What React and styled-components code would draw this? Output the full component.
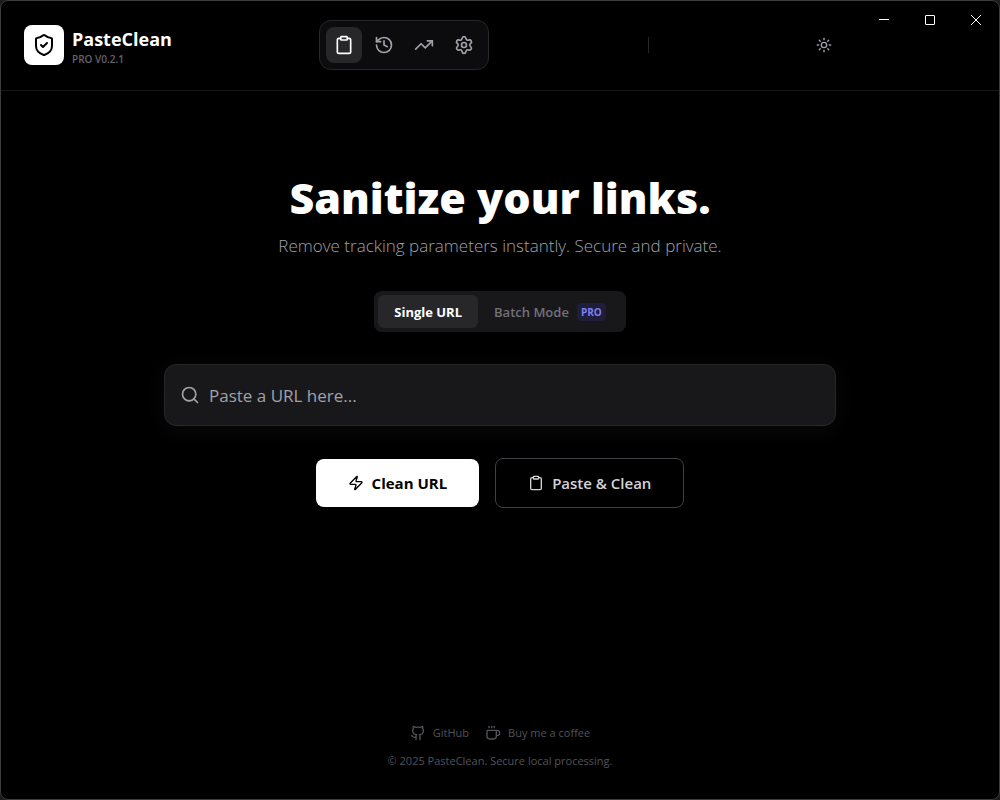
import React, { useState } from 'react';
import styled, { createGlobalStyle } from 'styled-components';
import {
  ShieldCheck,
  Clipboard,
  History,
  TrendingUp,
  Settings,
  Sun,
  Search,
  Zap,
  Github,
  Coffee,
} from 'lucide-react';

const navItems = [
  { id: 'clean', label: 'Clean', icon: Clipboard },
  { id: 'history', label: 'History', icon: History },
  { id: 'stats', label: 'Statistics', icon: TrendingUp },
  { id: 'settings', label: 'Settings', icon: Settings },
];

const App = () => {
  const [page, setPage] = useState('clean');
  const [mode, setMode] = useState('single');
  const [url, setUrl] = useState('');

  return (
    <>
      <GlobalStyle />
      <Window>
        <WindowControls>
          <WindowButton aria-label="Minimize">
            <svg width="10" height="10" shapeRendering="crispEdges">
              <path d="M0 4.5h10" stroke="#fff" />
            </svg>
          </WindowButton>
          <WindowButton aria-label="Maximize">
            <svg width="10" height="10">
              <rect x="0.5" y="0.5" width="9" height="9" rx="0.5" fill="none" stroke="#fff" />
            </svg>
          </WindowButton>
          <WindowButton aria-label="Close">
            <svg width="10" height="10">
              <path d="M0 0l10 10M10 0L0 10" stroke="#fff" />
            </svg>
          </WindowButton>
        </WindowControls>

        <Header>
          <Brand>
            <Logo>
              <ShieldCheck size={24} />
            </Logo>
            <BrandText>
              <BrandName>PasteClean</BrandName>
              <Version>PRO V0.2.1</Version>
            </BrandText>
          </Brand>
          <Nav>
            {navItems.map(({ id, label, icon: Icon }) => (
              <NavButton
                key={id}
                aria-label={label}
                $active={page === id}
                onClick={() => setPage(id)}
              >
                <Icon size={20} />
              </NavButton>
            ))}
          </Nav>
          <HeaderRight>
            <Divider />
            <ThemeButton aria-label="Toggle theme">
              <Sun size={16} />
            </ThemeButton>
          </HeaderRight>
        </Header>

        <Main>
          <Title>Sanitize your links.</Title>
          <Subtitle>Remove tracking parameters instantly. Secure and private.</Subtitle>
          <Tabs>
            <Tab $active={mode === 'single'} onClick={() => setMode('single')}>
              Single URL
            </Tab>
            <Tab $active={mode === 'batch'} onClick={() => setMode('batch')}>
              Batch Mode <ProBadge>PRO</ProBadge>
            </Tab>
          </Tabs>
          <SearchBox>
            <Search size={20} />
            <UrlInput
              aria-label="URL"
              placeholder="Paste a URL here..."
              value={url}
              onChange={(e) => setUrl(e.target.value)}
            />
          </SearchBox>
          <Actions>
            <CleanButton>
              <Zap size={16} />
              Clean URL
            </CleanButton>
            <PasteButton>
              <Clipboard size={16} />
              Paste &amp; Clean
            </PasteButton>
          </Actions>
        </Main>

        <Footer>
          <FooterLinks>
            <FooterLink href="#github">
              <Github size={16} />
              GitHub
            </FooterLink>
            <FooterLink href="#coffee">
              <Coffee size={16} />
              Buy me a coffee
            </FooterLink>
          </FooterLinks>
          <Copyright>© 2025 PasteClean. Secure local processing.</Copyright>
        </Footer>
      </Window>
    </>
  );
};

export default App;

// Styled Components
const GlobalStyle = createGlobalStyle`
  * {
    box-sizing: border-box;
  }

  body {
    margin: 0;
    background: #1c1c1e;
    font-family: 'Open Sans', 'Noto Sans', sans-serif;
    color: #fff;
  }

  button, input {
    font-family: inherit;
  }

  svg {
    flex-shrink: 0;
  }
`;

const Window = styled.div`
  position: relative;
  display: flex;
  flex-direction: column;
  min-height: 100vh;
  background: #000;
  border: 1px solid #3c3c3c;
  border-radius: 8px;
`;

const WindowControls = styled.div`
  position: absolute;
  top: 0;
  right: 0;
  display: flex;
`;

const WindowButton = styled.button`
  display: flex;
  align-items: center;
  justify-content: center;
  width: 46px;
  height: 38px;
  padding: 0;
  background: none;
  border: none;
`;

const Header = styled.header`
  display: flex;
  align-items: center;
  justify-content: space-between;
  height: 90px;
  padding: 0 159px 1px 23px;
  border-bottom: 1px solid #18181b;
`;

const Brand = styled.div`
  display: flex;
  align-items: center;
  gap: 8px;
  width: 143px;
`;

const Logo = styled.div`
  display: flex;
  align-items: center;
  justify-content: center;
  flex-shrink: 0;
  width: 40px;
  height: 40px;
  background: #fff;
  border-radius: 8px;
  color: #000;
`;

const BrandText = styled.div`
  padding-top: 4px;
`;

const BrandName = styled.div`
  font-size: 18px;
  font-weight: 700;
  line-height: 24px;
`;

const Version = styled.div`
  font-size: 10px;
  font-weight: 600;
  line-height: 16px;
  color: #63636b;
`;

const Nav = styled.nav`
  display: flex;
  gap: 4px;
  padding: 6px;
  background: #0c0c0e;
  border: 1px solid #27272a;
  border-radius: 12px;
`;

const NavButton = styled.button`
  display: flex;
  align-items: center;
  justify-content: center;
  width: 36px;
  height: 36px;
  padding: 0;
  background: ${(props) => (props.$active ? '#27272a' : 'transparent')};
  border: none;
  border-radius: 8px;
  color: ${(props) => (props.$active ? '#fff' : '#a1a1aa')};
  cursor: pointer;
`;

const HeaderRight = styled.div`
  display: flex;
  align-items: center;
  justify-content: space-between;
  width: 200px;
  padding-left: 8px;
`;

const Divider = styled.div`
  width: 1px;
  height: 16px;
  background: #27272a;
`;

const ThemeButton = styled.button`
  display: flex;
  align-items: center;
  justify-content: center;
  width: 32px;
  height: 32px;
  padding: 0;
  background: none;
  border: none;
  color: #a1a1aa;
  cursor: pointer;
`;

const Main = styled.main`
  flex: 1;
  display: flex;
  flex-direction: column;
  align-items: center;
  width: 100%;
  max-width: 720px;
  margin: 0 auto;
  padding: 79px 24px 32px;
`;

const Title = styled.h1`
  margin: 0;
  font-size: 43px;
  font-weight: 800;
  line-height: 56px;
`;

const Subtitle = styled.p`
  margin: 6px 0 31px;
  font-size: 17px;
  font-weight: 300;
  line-height: 28px;
  color: #a1a1aa;
`;

const Tabs = styled.div`
  display: flex;
  padding: 4px;
  background: #18181b;
  border-radius: 8px;
`;

const Tab = styled.button`
  display: flex;
  align-items: center;
  gap: 8px;
  height: 33px;
  padding: 0 16px;
  background: ${(props) => (props.$active ? '#27272a' : 'transparent')};
  border: none;
  border-radius: 6px;
  font-size: 13px;
  font-weight: ${(props) => (props.$active ? 700 : 600)};
  color: ${(props) => (props.$active ? '#fff' : '#71717a')};
  cursor: pointer;
`;

const ProBadge = styled.span`
  padding: 2px 4px;
  background: #1e1d3a;
  border-radius: 4px;
  font-size: 10px;
  font-weight: 700;
  line-height: 14px;
  color: #7c7ff5;
`;

const SearchBox = styled.label`
  display: flex;
  align-items: center;
  gap: 9px;
  width: 100%;
  height: 62px;
  margin: 32px 0;
  padding: 0 15px;
  background: #18181b;
  border: 1px solid #27272a;
  border-radius: 12px;
  box-shadow: 0 4px 24px rgba(255, 255, 255, 0.04);
  color: #a1a1aa;
`;

const UrlInput = styled.input`
  flex: 1;
  min-width: 0;
  padding: 0;
  background: none;
  border: none;
  outline: none;
  font-size: 17px;
  color: #fff;

  &::placeholder {
    color: #a1a1aa;
    opacity: 1;
  }
`;

const Actions = styled.div`
  display: flex;
  align-items: center;
  gap: 16px;
`;

const CleanButton = styled.button`
  display: flex;
  align-items: center;
  gap: 8px;
  height: 48px;
  padding: 0 32px;
  background: #fff;
  border: none;
  border-radius: 8px;
  font-size: 15px;
  font-weight: 700;
  color: #000;
  cursor: pointer;
`;

const PasteButton = styled(CleanButton)`
  height: 50px;
  background: transparent;
  border: 1px solid #3f3f46;
  font-weight: 600;
  color: #d4d4d8;
`;

const Footer = styled.footer`
  display: flex;
  flex-direction: column;
  align-items: center;
  gap: 8px;
  padding-bottom: 28px;
  font-size: 11px;
  line-height: 20px;
  color: #52525b;
`;

const FooterLinks = styled.div`
  display: flex;
  gap: 16px;
`;

const FooterLink = styled.a`
  display: flex;
  align-items: center;
  gap: 7px;
  color: inherit;
  text-decoration: none;
`;

const Copyright = styled.p`
  margin: 0;
`;
